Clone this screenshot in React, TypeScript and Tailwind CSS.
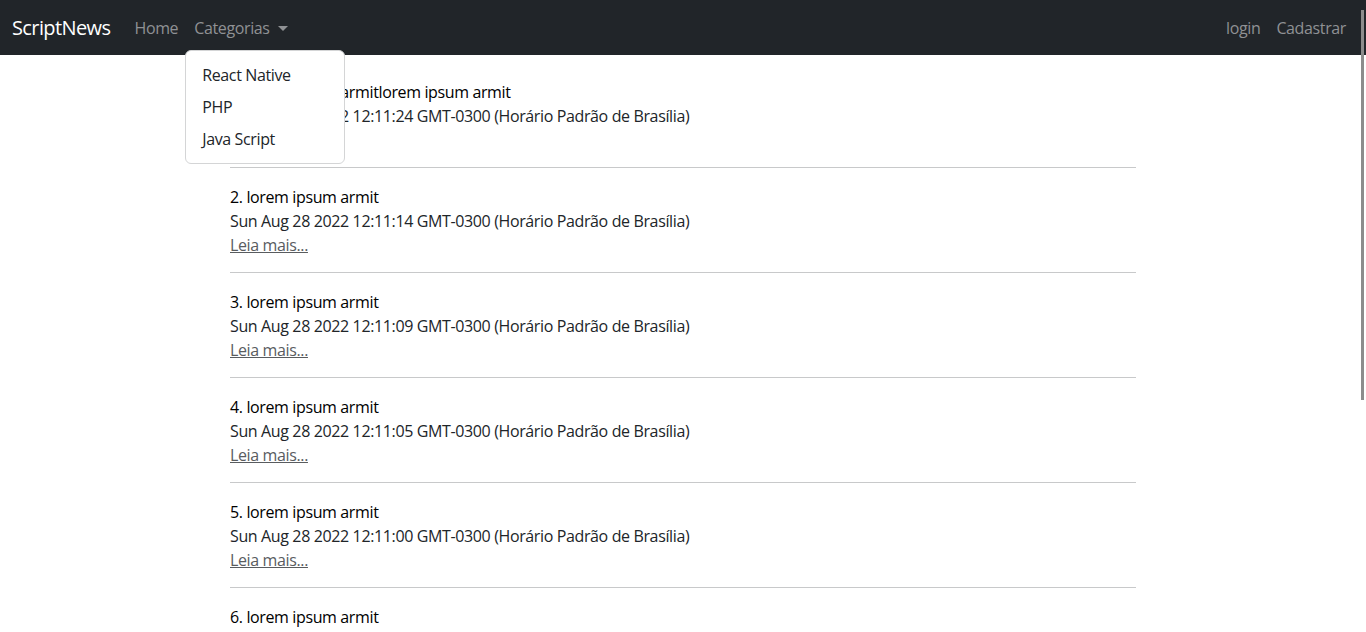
import React from 'react';

interface Post {
  id: number;
  title: string;
  date: string;
}

const posts: Post[] = [
  { id: 1, title: '1. lorem ipsum armitlorem ipsum armit', date: 'Sun Aug 28 2022 12:11:24 GMT-0300 (Horário Padrão de Brasília)' },
  { id: 2, title: '2. lorem ipsum armit', date: 'Sun Aug 28 2022 12:11:14 GMT-0300 (Horário Padrão de Brasília)' },
  { id: 3, title: '3. lorem ipsum armit', date: 'Sun Aug 28 2022 12:11:09 GMT-0300 (Horário Padrão de Brasília)' },
  { id: 4, title: '4. lorem ipsum armit', date: 'Sun Aug 28 2022 12:11:05 GMT-0300 (Horário Padrão de Brasília)' },
  { id: 5, title: '5. lorem ipsum armit', date: 'Sun Aug 28 2022 12:11:00 GMT-0300 (Horário Padrão de Brasília)' },
  { id: 6, title: '6. lorem ipsum armit', date: 'Sun Aug 28 2022 12:10:55 GMT-0300 (Horário Padrão de Brasília)' },
];

export default function App() {
  return (
    <div className="relative h-[632px] overflow-hidden bg-white font-['Open_Sans',sans-serif] text-[16px] leading-6 tracking-[-0.37px] text-[#212529]">
      {/* navbar */}
      <nav className="flex h-[55px] items-center justify-between bg-[#212529] pl-3 pr-5">
        <div className="flex items-center">
          <a className="mr-4 text-[20px] tracking-[-0.6px] text-white">ScriptNews</a>
          <div className="flex items-center">
            <a className="px-2 text-[#8f9194]">Home</a>
            <div className="relative">
              <a className="flex items-center px-2 text-[#8f9194]">
                Categorias
                <span className="ml-[8px] mt-[1px] h-0 w-0 border-x-[5px] border-t-[5px] border-x-transparent border-t-[#8f9194]" />
              </a>
              <div className="absolute left-[-1px] top-[34px] z-10 w-[160px] rounded-md border border-[#d4d5d6] bg-white py-2">
                <a className="block px-4 py-1 text-[#212529]">React Native</a>
                <a className="block px-4 py-1 text-[#212529]">PHP</a>
                <a className="block px-4 py-1 text-[#212529]">Java Script</a>
              </div>
            </div>
          </div>
        </div>
        <div className="flex items-center">
          <a className="px-2 text-[#8f9194]">login</a>
          <a className="pl-2 text-[#8f9194]">Cadastrar</a>
        </div>
      </nav>

      {/* posts */}
      <main className="mx-auto w-[906px] pt-[25px]">
        {posts.map((post) => (
          <div key={post.id}>
            <div className="text-black">{post.title}</div>
            <div>{post.date}</div>
            <a className="text-[#595c5f] underline">Leia mais...</a>
            <hr className="mb-[17px] mt-[15px] border-t border-[#c8c9ca]" />
          </div>
        ))}
      </main>

      {/* scrollbar thumb */}
      <div className="absolute right-[2px] top-[10px] h-[390px] w-[3px] bg-[#8c8c8c]" />
    </div>
  );
}
